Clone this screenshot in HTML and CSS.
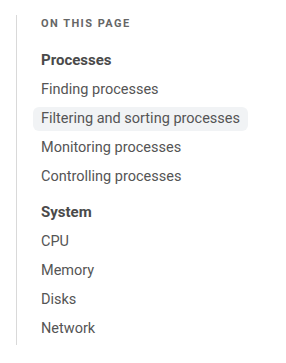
FILE: index.html
```html
<!DOCTYPE html>
<html>
<head>
<meta charset="utf-8">
<link rel="stylesheet" href="styles.css">
</head>
<body>
<nav class="toc">
  <p class="toc-title">On this page</p>
  <div class="toc-group">
    <a class="toc-group-title">Processes</a>
    <ul class="toc-list">
      <li><a class="toc-link">Finding processes</a></li>
      <li><a class="toc-link active">Filtering and sorting processes</a></li>
      <li><a class="toc-link">Monitoring processes</a></li>
      <li><a class="toc-link">Controlling processes</a></li>
    </ul>
  </div>
  <div class="toc-group">
    <a class="toc-group-title">System</a>
    <ul class="toc-list">
      <li><a class="toc-link">CPU</a></li>
      <li><a class="toc-link">Memory</a></li>
      <li><a class="toc-link">Disks</a></li>
      <li><a class="toc-link">Network</a></li>
    </ul>
  </div>
</nav>
</body>
</html>
```
FILE: styles.css
```css
html, body {
  margin: 0;
  padding: 0;
  background: #fff;
}
body {
  font-family: Roboto, "Liberation Sans", sans-serif;
}
.toc {
  margin: 15px 0 0 16px;
  padding: 2px 0 4px 24px;
  border-left: 1px solid #d9d9d9;
  display: flex;
  flex-direction: column;
  gap: 11px;
}
.toc-title {
  margin: 0 0 6px;
  font-size: 11px;
  line-height: 14px;
  font-weight: 700;
  letter-spacing: 1.45px;
  text-transform: uppercase;
  color: #666;
}
.toc-group {
  display: flex;
  flex-direction: column;
  gap: 6px;
}
.toc-group-title {
  display: block;
  font-size: 15px;
  line-height: 24px;
  font-weight: 700;
  color: #4a4a4a;
}
.toc-list {
  list-style: none;
  margin: 0;
  padding: 0;
  display: flex;
  flex-direction: column;
  gap: 5px;
}
.toc-link {
  display: inline-block;
  margin-left: -8px;
  padding: 2px 8px;
  font-size: 14.5px;
  line-height: 20px;
  color: #555;
  border-radius: 6px;
}
.toc-link.active {
  background: #f1f3f5;
}
```
